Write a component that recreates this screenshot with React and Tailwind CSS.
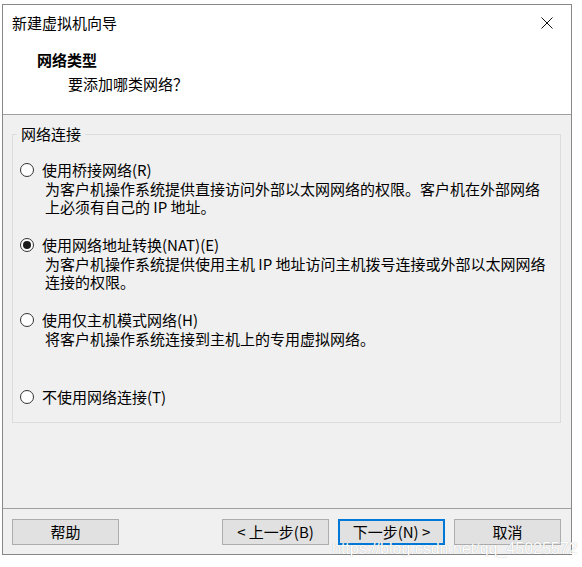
import React from 'react';

function Radio({ checked }) {
  return (
    <span className="w-[14px] h-[14px] rounded-full border border-[#333] bg-white flex items-center justify-center shrink-0">
      {checked && <span className="w-[8px] h-[8px] rounded-full bg-[#1a1a1a]" />}
    </span>
  );
}

function Option({ checked, label, desc, className = '' }) {
  return (
    <div className={className}>
      <div className="flex items-center h-[20px] leading-[20px] pl-[7px]">
        <Radio checked={checked} />
        <span className="ml-[8px]">{label}</span>
      </div>
      {desc && (
        <div className="pl-[32px] pr-[8px]">
          {desc.map((line) => (
            <div key={line} className="h-[18px] leading-[18px] whitespace-nowrap">{line}</div>
          ))}
        </div>
      )}
    </div>
  );
}

function Button({ children, primary }) {
  return (
    <button
      className={
        'w-[107px] h-[26px] bg-[#e1e1e1] text-[15px] leading-[20px] text-black flex items-center justify-center ' +
        (primary ? 'border-2 border-[#0078d7]' : 'border border-[#adadad]')
      }
    >
      {children}
    </button>
  );
}

export default function App() {
  return (
    <div className="relative w-[582px] h-[567px] bg-white overflow-hidden pt-[4px] pl-[2px] font-['Noto_Sans_CJK_SC','Noto_Sans',sans-serif] text-[15px] text-black">
      <div className="w-[570px] h-[551px] border border-[#888] flex flex-col">
        {/* header */}
        <div className="h-[110px] bg-white border-b border-[#a0a0a0] shrink-0">
          <div className="flex items-center h-[20px] mt-[8px] pl-[9px] pr-[18px] leading-[20px]">
            <span className="flex-1">新建虚拟机向导</span>
            <svg width="12" height="12" viewBox="0 0 12 12" className="shrink-0">
              <path d="M0.5 0.5 L11.5 11.5 M11.5 0.5 L0.5 11.5" stroke="#111" strokeWidth="1" fill="none" />
            </svg>
          </div>
          <div className="mt-[17px] pl-[34px] h-[20px] leading-[20px] font-bold">网络类型</div>
          <div className="mt-[4px] pl-[65px] h-[20px] leading-[20px]">要添加哪类网络？</div>
        </div>

        {/* body */}
        <div className="flex-1 bg-[#f0f0f0] flex flex-col">
          <fieldset className="mt-[9px] ml-[9px] mr-[10px] h-[299px] border border-[#dcdcdc]">
            <legend className="ml-[4px] px-[4px] leading-[20px]">网络连接</legend>
            <Option
              className="mt-[16px]"
              label="使用桥接网络(R)"
              desc={[
                '为客户机操作系统提供直接访问外部以太网网络的权限。客户机在外部网络',
                '上必须有自己的 IP 地址。',
              ]}
            />
            <Option
              className="mt-[19px]"
              checked
              label="使用网络地址转换(NAT)(E)"
              desc={[
                '为客户机操作系统提供使用主机 IP 地址访问主机拨号连接或外部以太网网络',
                '连接的权限。',
              ]}
            />
            <Option
              className="mt-[19px]"
              label="使用仅主机模式网络(H)"
              desc={['将客户机操作系统连接到主机上的专用虚拟网络。']}
            />
            <Option className="mt-[39px]" label="不使用网络连接(T)" />
          </fieldset>

          <div className="flex-1" />
          <div className="h-px bg-[#a0a0a0]" />
          <div className="flex items-center pt-[10px] pb-[9px] pl-[9px] pr-[10px]">
            <Button>帮助</Button>
            <div className="flex-1" />
            <div className="flex gap-[9px]">
              <Button>&lt; 上一步(B)</Button>
              <Button primary>下一步(N) &gt;</Button>
              <Button>取消</Button>
            </div>
          </div>
        </div>
      </div>

      <div className="absolute left-[332px] top-[539px] whitespace-nowrap font-['Liberation_Sans',Arial,sans-serif] text-[16px] leading-[20px] text-white [text-shadow:0_0_1px_rgba(0,0,0,0.3)]">
        https://blog.csdn.net/qq_45025572
      </div>
    </div>
  );
}
